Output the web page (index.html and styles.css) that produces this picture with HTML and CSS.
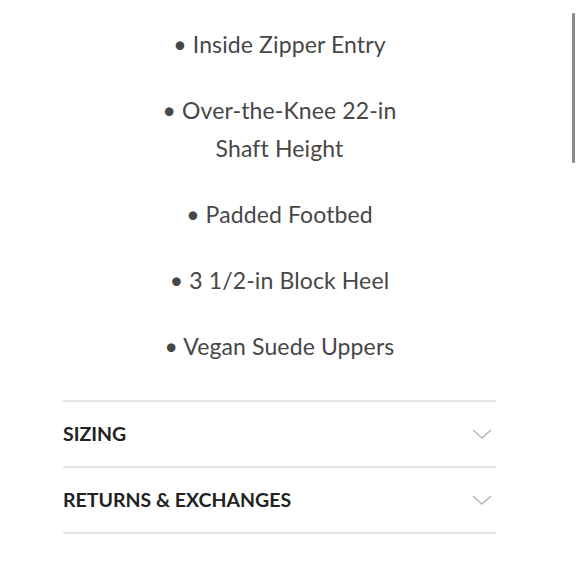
FILE: index.html
```html
<!DOCTYPE html>
<html>
<head>
<meta charset="utf-8">
<link rel="stylesheet" href="styles.css">
</head>
<body>
<div class="page">
  <ul class="features">
    <li>• Inside Zipper Entry</li>
    <li>• Over-the-Knee 22-in<br>Shaft Height</li>
    <li>• Padded Footbed</li>
    <li>• 3 1/2-in Block Heel</li>
    <li>• Vegan Suede Uppers</li>
  </ul>
  <div class="accordion">
    <div class="acc-row">
      <span class="acc-title">SIZING</span>
      <svg class="chev" width="20" height="10" viewBox="0 0 20 10"><path d="M1 1 L10 9 L19 1" fill="none" stroke="#b8b8b8" stroke-width="1.5"/></svg>
    </div>
    <div class="acc-row">
      <span class="acc-title">RETURNS &amp; EXCHANGES</span>
      <svg class="chev" width="20" height="10" viewBox="0 0 20 10"><path d="M1 1 L10 9 L19 1" fill="none" stroke="#b8b8b8" stroke-width="1.5"/></svg>
    </div>
  </div>
</div>
<div class="scrollbar"></div>
</body>
</html>
```
FILE: styles.css
```css
html, body {
  margin: 0;
  padding: 0;
  background: #fff;
}
body {
  font-family: Lato, "Open Sans", sans-serif;
  width: 580px;
  height: 580px;
  overflow: hidden;
}
.page {
  width: 433px;
  margin-left: 63px;
  padding-top: 25px;
}
.features {
  list-style: none;
  margin: 0;
  padding: 0;
  text-align: center;
  color: #474747;
  font-size: 23px;
  letter-spacing: 0.12px;
  line-height: 38px;
}
.features li {
  margin-bottom: 28px;
}
.features li:last-child {
  margin-bottom: 0;
}
.accordion {
  margin-top: 35px;
  border-top: 2px solid #e6e6e6;
}
.acc-row {
  height: 64px;
  display: flex;
  align-items: center;
  justify-content: space-between;
  border-bottom: 2px solid #e6e6e6;
}
.acc-title {
  font-size: 19.5px;
  font-weight: 700;
  color: #222;
  padding-bottom: 1px;
}
.chev {
  margin-right: 4px;
  display: block;
}
.scrollbar {
  position: absolute;
  left: 572px;
  top: 13px;
  width: 3px;
  height: 150px;
  background: #8a8a8a;
  border-radius: 1px;
}
```
